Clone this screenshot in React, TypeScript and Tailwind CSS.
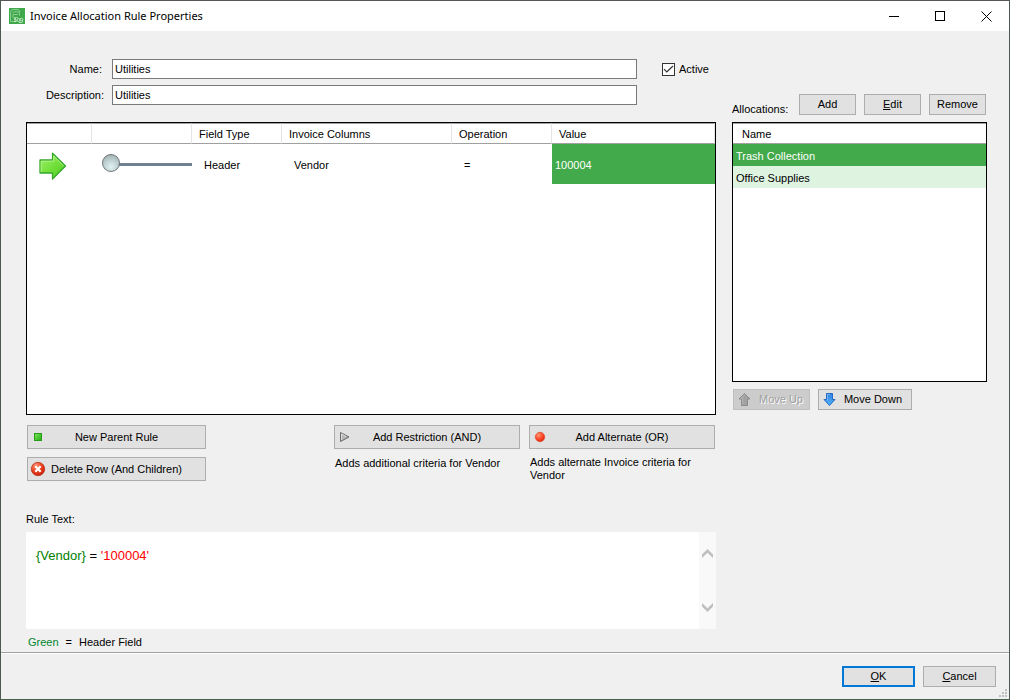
import React, { useState } from "react";

const buttonBase =
  "flex shrink-0 items-center border border-[#adadad] bg-[#e1e1e1] text-black";

function AppIcon() {
  return (
    <svg width="16" height="16" viewBox="0 0 16 16" aria-hidden="true" className="shrink-0">
      <rect width="16" height="16" fill="#3fa84b" />
      <g fill="none" stroke="#93d39a" strokeWidth="0.900">
        <path d="M1.500 13.500V4.500Q1.500 1.500 4.500 1.500H8Q10.500 1.500 11 4" />
        <path d="M3.500 4.500Q7 2.500 10.500 4.500V7.500" />
        <path d="M4 6.500H9M4.500 9.500H9M1.500 13.500H7.500" />
        <path d="M4 6.500V9.500" />
      </g>
      <g fill="none" stroke="#c5e8c8" strokeWidth="1">
        <path d="M7 10.500H5.500V12H7V13.500H5" />
        <circle cx="9.500" cy="12" r="1.500" />
        <circle cx="12.500" cy="11.500" r="1.300" />
        <path d="M10 14.500H12.500Q14.500 14 13.500 12.500" />
      </g>
    </svg>
  );
}

function GreenArrow() {
  return (
    <svg width="29" height="29" viewBox="0 0 29 29" aria-hidden="true">
      <defs>
        <linearGradient id="green-arrow" x1="0" y1="0" x2="1" y2="1">
          <stop offset="0" stopColor="#a4f070" />
          <stop offset="0.500" stopColor="#74e03c" />
          <stop offset="1" stopColor="#4cc81e" />
        </linearGradient>
      </defs>
      <path
        d="M2 9H14.500V2.200L27.500 15 14.500 28V22H2Z"
        fill="url(#green-arrow)"
        stroke="#35a82c"
        strokeWidth="1.300"
        strokeLinejoin="round"
      />
      <path d="M3.200 21V10.200H15.700V5L25.500 15" fill="none" stroke="#b0f284" strokeWidth="1" />
    </svg>
  );
}

function GreenSquare() {
  return (
    <svg width="16" height="16" viewBox="0 0 16 16" aria-hidden="true">
      <defs>
        <linearGradient id="green-square" x1="0" y1="0" x2="1" y2="1">
          <stop offset="0" stopColor="#7be85c" />
          <stop offset="1" stopColor="#25ab12" />
        </linearGradient>
      </defs>
      <rect x="4.500" y="4.500" width="7" height="7" fill="url(#green-square)" stroke="#2a9a1c" />
    </svg>
  );
}

function DeleteIcon() {
  return (
    <svg width="16" height="16" viewBox="0 0 16 16" aria-hidden="true">
      <defs>
        <radialGradient id="delete-fill" cx="0.350" cy="0.250" r="0.800">
          <stop offset="0" stopColor="#ff9a80" />
          <stop offset="0.500" stopColor="#ef4423" />
          <stop offset="1" stopColor="#c81e08" />
        </radialGradient>
      </defs>
      <circle cx="8" cy="8" r="6.700" fill="url(#delete-fill)" stroke="#b8321c" strokeWidth="0.800" />
      <path d="M5.300 5.300l5.400 5.400M10.700 5.300l-5.400 5.400" stroke="#fff" strokeWidth="2.200" />
    </svg>
  );
}

function GreyTriangle() {
  return (
    <svg width="16" height="16" viewBox="0 0 16 16" aria-hidden="true">
      <path d="M3.500 3.500L12 8 3.500 12.500Z" fill="#b5b5b5" stroke="#6c6c6c" />
      <path d="M4.500 11V5L9 7.500" fill="none" stroke="#dcdcdc" />
    </svg>
  );
}

function RedDot() {
  return (
    <svg width="16" height="16" viewBox="0 0 16 16" aria-hidden="true">
      <defs>
        <radialGradient id="red-dot" cx="0.350" cy="0.300" r="0.750">
          <stop offset="0" stopColor="#ff9d78" />
          <stop offset="0.500" stopColor="#ff5030" />
          <stop offset="1" stopColor="#e02808" />
        </radialGradient>
      </defs>
      <circle cx="8" cy="8" r="4.700" fill="url(#red-dot)" stroke="#d63a1c" strokeWidth="0.600" />
    </svg>
  );
}

function MoveUpIcon() {
  return (
    <svg width="13" height="15" viewBox="0 0 13 15" aria-hidden="true" className="shrink-0">
      <path
        d="M6.500 1.500L12 7H9.500V13.500H3.500V7H1Z"
        fill="#a2a2a2"
        stroke="#8a8a8a"
        strokeLinejoin="round"
      />
      <path d="M4.500 12V6.500H3L6.500 3" fill="none" stroke="#b5b5b5" />
    </svg>
  );
}

function MoveDownIcon() {
  return (
    <svg width="13" height="15" viewBox="0 0 13 15" aria-hidden="true" className="shrink-0">
      <defs>
        <linearGradient id="move-down" x1="0" y1="0" x2="0" y2="1">
          <stop offset="0" stopColor="#2f7fe0" />
          <stop offset="1" stopColor="#52b4fa" />
        </linearGradient>
      </defs>
      <path
        d="M3.500 1.500H9.500V7.500H12L6.500 13.500 1 7.500H3.500Z"
        fill="url(#move-down)"
        stroke="#2468c4"
        strokeLinejoin="round"
      />
      <path d="M4.500 8.500V2.500H7" fill="none" stroke="#74b6f6" />
    </svg>
  );
}

function RuleButton({ icon, label, width }: { icon: React.ReactNode; label: string; width: string }) {
  return (
    <button type="button" className={`${buttonBase} h-6 px-0.5 ${width}`}>
      <span className="w-4 shrink-0">{icon}</span>
      <span className="flex-1 text-center whitespace-nowrap">{label}</span>
      <span className="w-4 shrink-0" />
    </button>
  );
}

function TitleBar() {
  const control = "flex h-full w-[46px] items-center justify-center";
  return (
    <header className="flex h-[30px] shrink-0 items-center bg-white pl-2">
      <AppIcon />
      <h1 className="ml-[5px] flex-1 font-['Noto_Sans',sans-serif] text-[11px] leading-4">
        Invoice Allocation Rule Properties
      </h1>
      <div className="flex h-full">
        <button type="button" aria-label="Minimize" className={control}>
          <svg width="11" height="11" viewBox="0 0 11 11">
            <path d="M0 5.500H10" stroke="#000" />
          </svg>
        </button>
        <button type="button" aria-label="Maximize" className={control}>
          <svg width="11" height="11" viewBox="0 0 11 11">
            <rect x="0.500" y="0.500" width="9" height="9" fill="none" stroke="#000" />
          </svg>
        </button>
        <button type="button" aria-label="Close" className={control}>
          <svg width="11" height="11" viewBox="0 0 11 11">
            <path d="M0.500 0.500L10.500 10.500M10.500 0.500L0.500 10.500" stroke="#000" />
          </svg>
        </button>
      </div>
    </header>
  );
}

function RuleForm() {
  const [name, setName] = useState("Utilities");
  const [description, setDescription] = useState("Utilities");
  const [active, setActive] = useState(true);
  const field = "h-5 min-w-0 flex-1 border border-[#7a7a7a] bg-white px-0.5 outline-none";
  return (
    <form className="flex gap-[25px]">
      <div className="flex flex-1 flex-col gap-1.5">
        <div className="flex items-center">
          <label htmlFor="name" className="w-[86px] shrink-0 pr-2.5 text-right">
            Name:
          </label>
          <input id="name" className={field} value={name} onChange={(e) => setName(e.target.value)} />
        </div>
        <div className="flex items-center">
          <label htmlFor="description" className="w-[86px] shrink-0 pr-2 text-right">
            Description:
          </label>
          <input
            id="description"
            className={field}
            value={description}
            onChange={(e) => setDescription(e.target.value)}
          />
        </div>
      </div>
      <label className="flex h-5 w-[54px] items-center gap-1">
        <span className="grid size-[13px] shrink-0">
          <input
            type="checkbox"
            checked={active}
            onChange={(e) => setActive(e.target.checked)}
            className="peer col-start-1 row-start-1 size-[13px] appearance-none border border-[#333] bg-white"
          />
          <svg
            viewBox="0 0 13 13"
            className="pointer-events-none invisible col-start-1 row-start-1 size-[13px] peer-checked:visible"
          >
            <path d="M2 6.200L4.800 9 11 3" fill="none" stroke="#333" strokeWidth="1.200" />
          </svg>
        </span>
        Active
      </label>
    </form>
  );
}

function CriteriaTable() {
  const [level, setLevel] = useState(0);
  const head = "border-r border-[#e5e5e5] px-[7px] pt-0.5 text-left font-normal";
  return (
    <div className="h-[293px] border border-black bg-white">
      <table className="w-full table-fixed border-separate border-spacing-0">
        <colgroup>
          <col className="w-[65px]" />
          <col className="w-[100px]" />
          <col className="w-[90px]" />
          <col className="w-[170px]" />
          <col className="w-[100px]" />
          <col />
        </colgroup>
        <thead>
          <tr className="h-[21px] *:border-t *:border-t-[#a0a0a0] *:border-b *:border-b-[#a0a0a0]">
            <th aria-label="Current row" className={head} />
            <th aria-label="Level" className={head} />
            <th className={head}>Field Type</th>
            <th className={head}>Invoice Columns</th>
            <th className={head}>Operation</th>
            <th className={head}>Value</th>
          </tr>
        </thead>
        <tbody>
          <tr className="h-10">
            <td className="pt-0.5 pl-[11px]">
              <GreenArrow />
            </td>
            <td className="pb-0.5 pl-2.5">
              <input
                type="range"
                aria-label="Level"
                min={0}
                max={5}
                value={level}
                onChange={(e) => setLevel(Number(e.target.value))}
                className="block h-[18px] w-full appearance-none bg-[linear-gradient(#708090,#708090)] bg-[length:calc(100%-9px)_3px] bg-[position:right_9px] bg-no-repeat [&::-webkit-slider-thumb]:size-[18px] [&::-webkit-slider-thumb]:appearance-none [&::-webkit-slider-thumb]:rounded-full [&::-webkit-slider-thumb]:border [&::-webkit-slider-thumb]:border-[#6f7678] [&::-webkit-slider-thumb]:bg-[radial-gradient(circle_at_50%_75%,#e2f2f2,#b9cccd_55%,#9aa5a7)]"
              />
            </td>
            <td className="px-3 pt-0.5">Header</td>
            <td className="px-3 pt-0.5">Vendor</td>
            <td className="px-3 pt-0.5">=</td>
            <td className="bg-[#43aa4b] px-[3px] pt-0.5 text-white">100004</td>
          </tr>
        </tbody>
      </table>
    </div>
  );
}

function RuleActions() {
  return (
    <div className="flex items-start justify-between px-px pt-2.5">
      <div className="flex flex-col gap-2">
        <RuleButton icon={<GreenSquare />} label="New Parent Rule" width="w-[179px]" />
        <RuleButton icon={<DeleteIcon />} label="Delete Row (And Children)" width="w-[179px]" />
      </div>
      <div className="flex gap-[9px]">
        <div className="w-[186px]">
          <RuleButton icon={<GreyTriangle />} label="Add Restriction (AND)" width="w-full" />
          <p className="pt-2 pl-px">Adds additional criteria for Vendor</p>
        </div>
        <div className="w-[186px]">
          <RuleButton icon={<RedDot />} label="Add Alternate (OR)" width="w-full" />
          <p className="pt-[7px] pl-px">Adds alternate Invoice criteria for Vendor</p>
        </div>
      </div>
    </div>
  );
}

function RuleText() {
  const arrow = "flex h-[17px] w-full items-center justify-center";
  return (
    <section className="pt-[31px]">
      <h2 className="leading-[13px]">Rule Text:</h2>
      <div className="mt-1.5 flex h-[97px] bg-white">
        <p className="flex-1 pt-4 pl-2.5 text-[13px] leading-4">
          <span className="text-[#008000]">{"{Vendor}"}</span> ={" "}
          <span className="text-[#ff0000]">'100004'</span>
        </p>
        <div className="flex w-[17px] shrink-0 flex-col justify-between bg-[#f9f9f9] py-[13px]">
          <button type="button" aria-label="Scroll up" className={arrow}>
            <svg width="11" height="9" viewBox="0 0 11 9">
              <path d="M5.500 0L11 5.500V9L5.500 3.800 0 9V5.500Z" fill="#bfbfbf" />
            </svg>
          </button>
          <button type="button" aria-label="Scroll down" className={arrow}>
            <svg width="11" height="9" viewBox="0 0 11 9">
              <path d="M5.500 9L11 3.500V0L5.500 5.200 0 0V3.500Z" fill="#bfbfbf" />
            </svg>
          </button>
        </div>
      </div>
      <p className="flex gap-[7px] pt-1.5 pl-0.5 leading-[14px]">
        <span className="text-[#00852f]">Green</span>
        <span>=</span>
        <span>Header Field</span>
      </p>
    </section>
  );
}

function Allocations() {
  const rows = ["Trash Collection", "Office Supplies"];
  const [selected, setSelected] = useState(0);
  const small = `${buttonBase} h-[21px] w-[57px] justify-center`;
  return (
    <aside className="w-[255px] shrink-0 pt-[35px]">
      <div className="flex items-end justify-between pr-px">
        <h2 className="leading-[11px]">Allocations:</h2>
        <div className="flex gap-2">
          <button type="button" className={small}>
            Add
          </button>
          <button type="button" className={small}>
            <span className="underline">E</span>dit
          </button>
          <button type="button" className={small}>
            Remove
          </button>
        </div>
      </div>
      <div className="mt-[7px] h-[260px] border border-black bg-white">
        <table className="w-full border-separate border-spacing-0">
          <thead>
            <tr className="h-[21px]">
              <th className="border-t border-b border-[#a0a0a0] px-[9px] pt-0.5 text-left font-normal">
                Name
              </th>
            </tr>
          </thead>
          <tbody>
            {rows.map((row, i) => (
              <tr
                key={row}
                onClick={() => setSelected(i)}
                className={
                  i === selected ? "h-[22px] bg-[#43aa4b] text-white" : "h-[22px] bg-[#dff3e1]"
                }
              >
                <td className="px-[3px] pt-0.5">{row}</td>
              </tr>
            ))}
          </tbody>
        </table>
      </div>
      <div className="flex gap-2 pt-[7px] pl-px">
        <button
          type="button"
          disabled
          className="flex h-[21px] w-[77px] items-center justify-between border border-[#bfbfbf] bg-[#cccccc] pr-1.5 pl-1 text-[#a0a0a0] [text-shadow:1px_1px_0_#fff]"
        >
          <MoveUpIcon />
          Move Up
        </button>
        <button type="button" className={`${buttonBase} h-[21px] w-[94px] justify-between pr-[9px] pl-1`}>
          <MoveDownIcon />
          Move Down
        </button>
      </div>
    </aside>
  );
}

function Footer() {
  const dots = [
    [6, 0],
    [3, 3],
    [6, 3],
    [0, 6],
    [3, 6],
    [6, 6],
  ];
  return (
    <footer className="relative flex h-[47px] shrink-0 justify-end gap-2 border-t border-[#a0a0a0] pt-[13px] pr-[13px] shadow-[inset_0_1px_0_#fff]">
      <button
        type="button"
        className="flex h-[21px] w-[73px] items-center justify-center border-2 border-[#0078d7] bg-[#e1e1e1]"
      >
        <span className="underline">O</span>K
      </button>
      <button type="button" className={`${buttonBase} h-[21px] w-[73px] justify-center`}>
        <span className="underline">C</span>ancel
      </button>
      <svg
        width="8"
        height="8"
        viewBox="0 0 8 8"
        aria-hidden="true"
        className="absolute right-0.5 bottom-0.5"
      >
        {dots.map(([x, y]) => (
          <rect key={`${x}-${y}`} x={x} y={y} width="2" height="2" fill="#bfbfbf" />
        ))}
      </svg>
    </footer>
  );
}

export default function App() {
  return (
    <div className="flex min-h-screen flex-col border border-t-[#555555] border-r-[#4d5a4f] border-b-[#48604b] border-l-[#4d5a4f] bg-[#f0f0f0] font-['Liberation_Sans',Arial,sans-serif] text-[11px] leading-[13px] text-black">
      <TitleBar />
      <main className="flex flex-1 gap-4 pt-7 pr-[22px] pl-[25px]">
        <div className="min-w-0 flex-1">
          <RuleForm />
          <div className="pt-[17px]">
            <CriteriaTable />
          </div>
          <RuleActions />
          <RuleText />
        </div>
        <Allocations />
      </main>
      <Footer />
    </div>
  );
}
